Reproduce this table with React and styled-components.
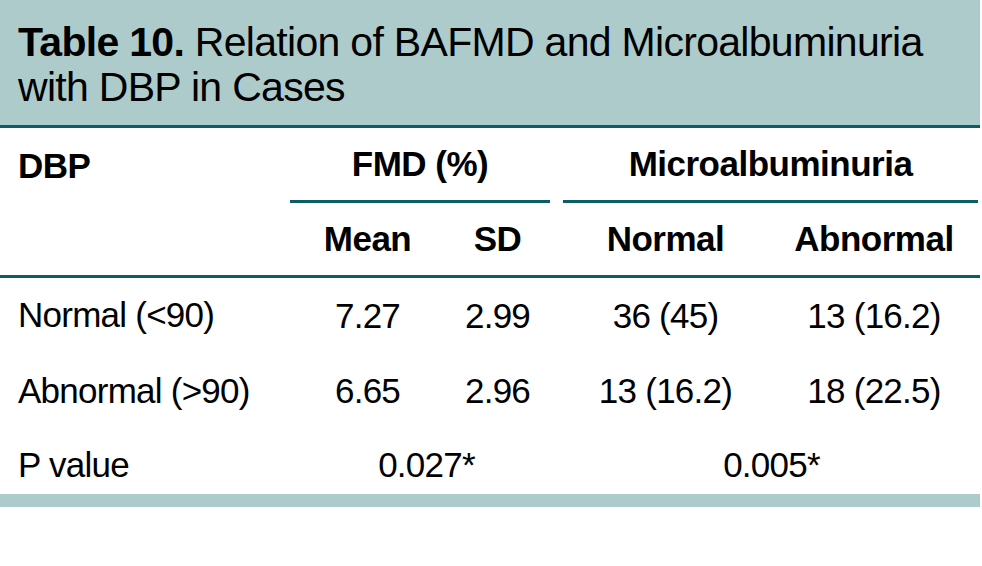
import styled, { createGlobalStyle } from "styled-components";

const GlobalStyle = createGlobalStyle`
  body {
    margin: 0;
    background: #ffffff;
    font-family: "Liberation Sans", Arial, sans-serif;
    color: #000;
  }
`;

const Wrapper = styled.div`
  width: 980px;
`;

const Caption = styled.div`
  background: #aecbcb;
  border-bottom: 3px solid #0b5e66;
  padding: 20px 18px 15px;
  font-size: 41px;
  letter-spacing: -0.7px;
  line-height: 45px;
  b {
    font-weight: bold;
  }
`;

const Grid = styled.div`
  display: grid;
  grid-template-columns: 290px 155px 118px 217px 200px;
`;

const Cell = styled.div`
  height: ${props => props.h || 74}px;
  padding-top: ${props => props.pt || 0}px;
  padding-right: ${props => props.pr || 0}px;
  padding-left: ${props => (props.first ? 18 : 0)}px;
  grid-column: ${props => props.span || "auto"};
  display: flex;
  align-items: center;
  justify-content: ${props => (props.first ? "flex-start" : "center")};
  font-size: 35px;
  letter-spacing: ${props => (props.bold ? -0.5 : -0.75)}px;
  font-weight: ${props => (props.bold ? "bold" : "normal")};
  box-sizing: border-box;
`;

const GroupHead = styled.div`
  grid-column: ${props => props.span};
  height: 75px;
  display: flex;
`;

const GroupLabel = styled.div`
  flex: 1;
  margin-right: ${props => props.mr}px;
  border-bottom: 3px solid #0b5e66;
  display: flex;
  align-items: center;
  justify-content: center;
  font-size: 35px;
  letter-spacing: -0.5px;
  font-weight: bold;
`;

const SubHead = styled(Cell)`
  height: 75px;
  border-bottom: 3px solid #0b5e66;
`;

const BottomBand = styled.div`
  height: 13px;
  background: #aecbcb;
`;

const rows = [
  ["Normal (<90)", "7.27", "2.99", "36 (45)", "13 (16.2)"],
  ["Abnormal (>90)", "6.65", "2.96", "13 (16.2)", "18 (22.5)"],
];

export default function App() {
  return (
    <Wrapper>
      <GlobalStyle />
      <Caption>
        <b>Table 10.</b> Relation of BAFMD and Microalbuminuria
        <br />
        with DBP in Cases
      </Caption>
      <Grid>
        <Cell first bold h={75}>DBP</Cell>
        <GroupHead span="2 / 4">
          <GroupLabel mr={13}>FMD (%)</GroupLabel>
        </GroupHead>
        <GroupHead span="4 / 6">
          <GroupLabel mr={2}>Microalbuminuria</GroupLabel>
        </GroupHead>

        <SubHead first />
        <SubHead bold>Mean</SubHead>
        <SubHead bold pr={13}>SD</SubHead>
        <SubHead bold pr={12}>Normal</SubHead>
        <SubHead bold pr={12}>Abnormal</SubHead>

        {rows.map(row =>
          row.map((value, i) => (
            <Cell
              key={row[0] + i}
              first={i === 0}
              h={i === 0 && row[0] === "Normal (<90)" ? 73 : 75}
              pr={i === 2 ? 13 : i > 2 ? 12 : 0}
            >
              {value}
            </Cell>
          ))
        )}

        <Cell first h={66} pt={8}>P value</Cell>
        <Cell span="2 / 4" h={66} pt={8}>0.027*</Cell>
        <Cell span="4 / 6" h={66} pt={8}>0.005*</Cell>
      </Grid>
      <BottomBand />
    </Wrapper>
  );
}
